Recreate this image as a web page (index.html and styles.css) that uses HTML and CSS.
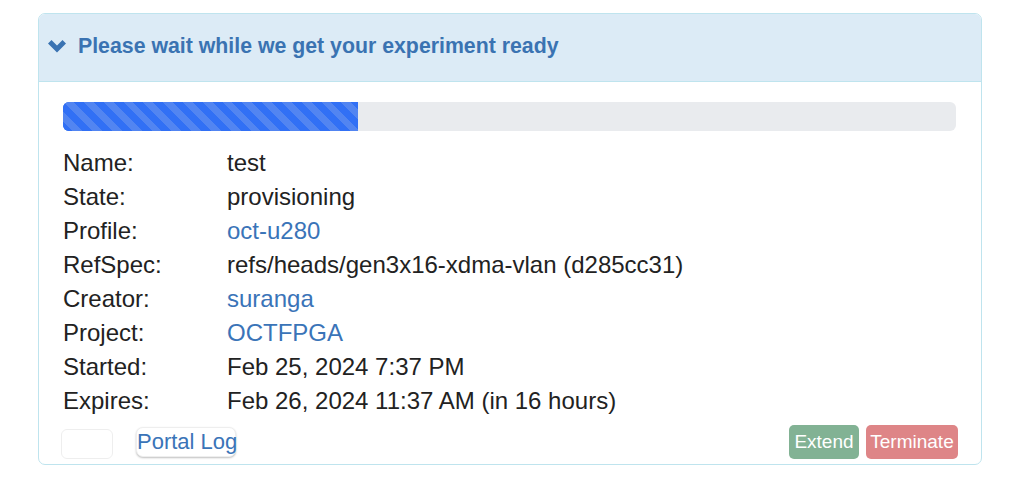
FILE: index.html
```html
<!DOCTYPE html>
<html>
<head>
<meta charset="utf-8">
<link rel="stylesheet" href="styles.css">
</head>
<body>
<div class="panel">
  <div class="panel-heading">
    <svg class="chev" width="18" height="13" viewBox="0 0 18 13"><path d="M0 3.5 L3.5 0 L9 5.5 L14.5 0 L18 3.5 L9 12.5 Z" fill="#3a73b2"/></svg>
    <span class="title">Please wait while we get your experiment ready</span>
  </div>
  <div class="panel-body">
    <div class="progress"><div class="bar" style="width:33%"></div></div>
    <div class="info">
      <div class="lbl">Name:</div><div class="val">test</div>
      <div class="lbl">State:</div><div class="val">provisioning</div>
      <div class="lbl">Profile:</div><div class="val"><a class="link">oct-u280</a></div>
      <div class="lbl">RefSpec:</div><div class="val">refs/heads/gen3x16-xdma-vlan (d285cc31)</div>
      <div class="lbl">Creator:</div><div class="val"><a class="link">suranga</a></div>
      <div class="lbl">Project:</div><div class="val"><a class="link">OCTFPGA</a></div>
      <div class="lbl">Started:</div><div class="val">Feb 25, 2024 7:37 PM</div>
      <div class="lbl">Expires:</div><div class="val">Feb 26, 2024 11:37 AM (in 16 hours)</div>
    </div>
    <div class="actions">
      <div class="left">
        <button class="blank"></button>
        <button class="portal">Portal Log</button>
      </div>
      <div class="right">
        <button class="btn extend">Extend</button>
        <button class="btn terminate">Terminate</button>
      </div>
    </div>
  </div>
</div>
</body>
</html>
```
FILE: styles.css
```css
html, body { margin: 0; padding: 0; background: #fff; }
body {
  font-family: "Liberation Sans", Arial, sans-serif;
  color: #222;
  padding: 13px 32px 0 38px;
}
.panel {
  border: 1px solid #bfe4ee;
  border-radius: 7px;
  width: 942px;
  overflow: hidden;
}
.panel-heading {
  background: #dcebf6;
  border-bottom: 1px solid #bfe4ee;
  height: 68px;
  display: flex;
  align-items: center;
  padding-left: 9px;
  padding-bottom: 2px;
  box-sizing: border-box;
}
.chev { margin-right: 12px; }
.title {
  font-size: 21.3px;
  font-weight: bold;
  color: #3a73b2;
}
.panel-body {
  padding: 20px 24px 5px 24px;
}
.progress {
  height: 29px;
  background: #e9ebee;
  border-radius: 6px;
  overflow: hidden;
  margin-right: 1px;
}
.bar {
  height: 100%;
  background-color: #3170f5;
  background-image: repeating-linear-gradient(45deg, #3170f5 0 7px, #5285f1 7px 14px);
}
.info {
  display: grid;
  grid-template-columns: 164px 1fr;
  margin-top: 15px;
  font-size: 24px;
  line-height: 34px;
}
.link { color: #3a74b8; text-decoration: none; }
.actions {
  display: flex;
  justify-content: space-between;
  align-items: center;
  margin-top: 7px;
}
.left { display: flex; align-items: center; gap: 23px; }
.blank {
  width: 52px; height: 30px;
  background: #fff;
  border: 1px solid #eee;
  border-radius: 6px;
  margin-left: -2px;
  margin-top: 3px;
}
.portal {
  background: #fff;
  border: 1px solid #eee;
  border-radius: 7px;
  box-shadow: 0 1px 2px rgba(0,0,0,0.25);
  font-family: "Liberation Sans", Arial, sans-serif;
  font-size: 22px;
  color: #3a74b8;
  padding: 0;
  width: 100px;
  height: 30px;
  line-height: 28px;
  white-space: nowrap;
}
.right { display: flex; gap: 7px; margin-right: -1px; }
.btn {
  border: none;
  border-radius: 5px;
  color: #fff;
  font-family: "Liberation Sans", Arial, sans-serif;
  font-size: 19px;
  height: 34px;
  padding: 0;
}
.extend { background: #82b294; width: 70px; }
.terminate { background: #de8587; width: 92px; }
```
